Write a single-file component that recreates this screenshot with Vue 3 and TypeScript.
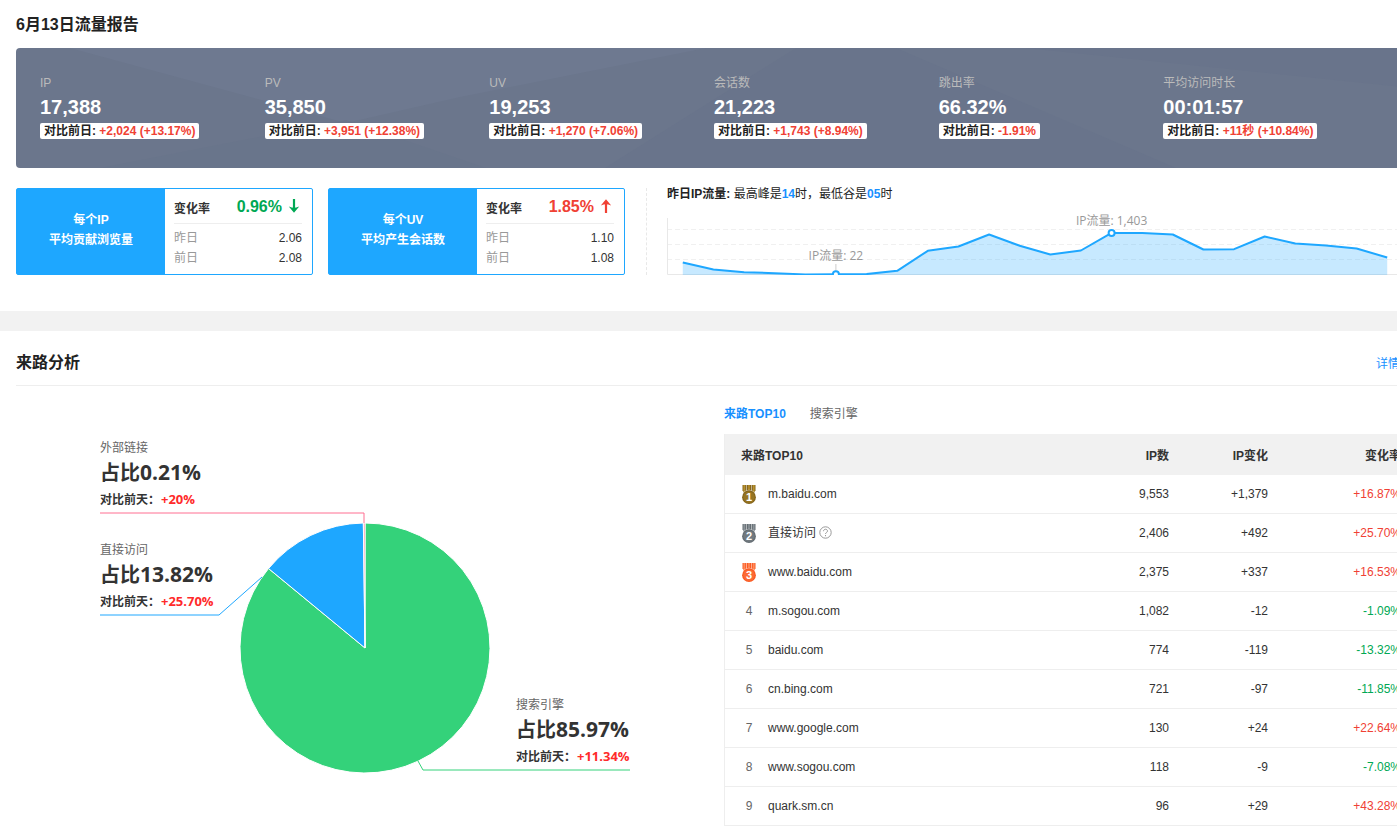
<script setup lang="ts">
interface Metric { label: string; value: string; diff: string }
interface Ratio { top: string; bottom: string; rate: string; up: boolean; yesterday: string; before: string }
interface Source { name: string; ip: string; change: string; rate: string; help?: boolean }
interface Callout { name: string; share: string; diff: string; x: number; y: number }

const metrics: Metric[] = [
  { label: 'IP', value: '17,388', diff: '+2,024 (+13.17%)' },
  { label: 'PV', value: '35,850', diff: '+3,951 (+12.38%)' },
  { label: 'UV', value: '19,253', diff: '+1,270 (+7.06%)' },
  { label: '会话数', value: '21,223', diff: '+1,743 (+8.94%)' },
  { label: '跳出率', value: '66.32%', diff: '-1.91%' },
  { label: '平均访问时长', value: '00:01:57', diff: '+11秒 (+10.84%)' },
]

const ratios: Ratio[] = [
  { top: '每个IP', bottom: '平均贡献浏览量', rate: '0.96%', up: false, yesterday: '2.06', before: '2.08' },
  { top: '每个UV', bottom: '平均产生会话数', rate: '1.85%', up: true, yesterday: '1.10', before: '1.08' },
]

const sources: Source[] = [
  { name: 'm.baidu.com', ip: '9,553', change: '+1,379', rate: '+16.87%' },
  { name: '直接访问', ip: '2,406', change: '+492', rate: '+25.70%', help: true },
  { name: 'www.baidu.com', ip: '2,375', change: '+337', rate: '+16.53%' },
  { name: 'm.sogou.com', ip: '1,082', change: '-12', rate: '-1.09%' },
  { name: 'baidu.com', ip: '774', change: '-119', rate: '-13.32%' },
  { name: 'cn.bing.com', ip: '721', change: '-97', rate: '-11.85%' },
  { name: 'www.google.com', ip: '130', change: '+24', rate: '+22.64%' },
  { name: 'www.sogou.com', ip: '118', change: '-9', rate: '-7.08%' },
  { name: 'quark.sm.cn', ip: '96', change: '+29', rate: '+43.28%' },
]

const medals = [
  { light: '#b8922e', dark: '#86661c' },
  { light: '#8b9398', dark: '#646d73' },
  { light: '#ff8a5a', dark: '#fa5a22' },
]

// Hourly IP counts; the vertical axis runs from 0 to 1500.
const hours = [417, 183, 93, 60, 20, 22, 30, 140, 807, 950, 1350, 973, 683, 817, 1403, 1397, 1350, 850, 860, 1283, 1050, 983, 883, 583]
const base = 75
const band = 735 / hours.length
const px = (i: number) => Math.round((band * (i + 0.5) + 0.5) * 10) / 10
const py = (v: number) => Math.round((base - v * 0.03) * 10) / 10
const line = hours.map((v, i) => `${px(i)},${py(v)}`).join(' ')
const area = `${px(0)},${base} ${line} ${px(hours.length - 1)},${base}`

// Pie slices, clockwise from twelve o'clock.
const cx = 349
const cy = 262
const radius = 125
const shares = [
  { share: 85.97, color: '#34d27a' },
  { share: 13.82, color: '#1ea7ff' },
  { share: 0.21, color: '#ff6f91' },
]
let turned = 0
const slices = shares.map(({ share, color }) => {
  const at = (p: number) => {
    const a = (p / 100) * Math.PI * 2
    return `${(cx + radius * Math.sin(a)).toFixed(2)} ${(cy - radius * Math.cos(a)).toFixed(2)}`
  }
  const from = at(turned)
  turned += share
  return { color, d: `M${cx} ${cy}L${from}A${radius} ${radius} 0 ${share > 50 ? 1 : 0} 1 ${at(turned)}Z` }
})

const callouts: Callout[] = [
  { name: '外部链接', share: '0.21%', diff: '+20%', x: 84, y: 66 },
  { name: '直接访问', share: '13.82%', diff: '+25.70%', x: 84, y: 168 },
  { name: '搜索引擎', share: '85.97%', diff: '+11.34%', x: 500, y: 323 },
]
</script>

<template>
  <div class="viewport">
    <main class="page">
      <section class="report">
        <h1>6月13日流量报告</h1>
        <div class="banner">
          <svg class="facets" viewBox="0 0 1396 120" preserveAspectRatio="none" aria-hidden="true">
            <polygon points="54,0 690,0 444,49 330,75" fill="#6e7990" />
            <polygon points="84,120 330,72 470,120" fill="#69758b" />
            <polygon points="589,120 780,0 880,0 1160,120" fill="#69748b" />
            <polygon points="1010,0 1396,0 1396,40" fill="#69748b" />
          </svg>
          <div v-for="m in metrics" :key="m.label" class="metric">
            <div class="metric-label">{{ m.label }}</div>
            <div class="metric-value">{{ m.value }}</div>
            <div class="metric-diff">对比前日: <span class="up">{{ m.diff }}</span></div>
          </div>
        </div>

        <div class="summary">
          <div v-for="r in ratios" :key="r.top" class="ratio">
            <div class="ratio-name"><span>{{ r.top }}</span><span>{{ r.bottom }}</span></div>
            <div class="ratio-body">
              <div class="ratio-head">
                <span>变化率</span>
                <strong :class="r.up ? 'up' : 'down'">
                  {{ r.rate }}
                  <svg width="12" height="16" viewBox="0 0 12 16" :class="{ flip: r.up }" aria-hidden="true">
                    <path d="M6 1V13" stroke="currentColor" stroke-width="2.2" />
                    <path d="M.8 8.6Q4 9.8 6 9.8T11.2 8.6L6 14.8Z" fill="currentColor" />
                  </svg>
                </strong>
              </div>
              <div class="ratio-row"><span>昨日</span><b>{{ r.yesterday }}</b></div>
              <div class="ratio-row"><span>前日</span><b>{{ r.before }}</b></div>
            </div>
          </div>

          <div class="hourly">
            <p><b>昨日IP流量:</b> 最高峰是<em>14</em>时，最低谷是<em>05</em>时</p>
            <svg class="trend" role="img" aria-label="昨日IP流量">
              <g stroke="#f0f0f0" stroke-dasharray="5 3">
                <path d="M0 29.5H745" /><path d="M0 44.5H745" /><path d="M0 59.5H745" />
              </g>
              <path d="M.5 18V74.5H745" fill="none" stroke="#e8e8e8" />
              <polygon :points="area" fill="#1ea7ff" fill-opacity=".25" />
              <polyline :points="line" fill="none" stroke="#1ea7ff" stroke-width="2" stroke-linejoin="round" />
              <path :d="`M${px(5)} 64V71`" stroke="#ccc" />
              <circle :cx="px(5)" :cy="py(22)" r="3" fill="#fff" stroke="#1ea7ff" stroke-width="2" />
              <circle :cx="px(14)" :cy="py(1403)" r="3" fill="#fff" stroke="#1ea7ff" stroke-width="2" />
              <text :x="px(5)" y="60">IP流量: 22</text>
              <text :x="px(14)" y="25">IP流量: 1,403</text>
            </svg>
          </div>
        </div>
      </section>

      <section class="sources">
        <header>
          <h2>来路分析</h2>
          <a href="#">详情</a>
        </header>
        <div class="columns">
          <svg class="pie" role="img" aria-label="来路分析">
            <path v-for="s in slices" :key="s.color" :d="s.d" :fill="s.color" stroke="#fff" />
            <g fill="none">
              <path d="M84 127H348V137" stroke="#ff6f91" />
              <path d="M84 229H203L246 191" stroke="#1ea7ff" />
              <path d="M614 384H407L402 375" stroke="#34d27a" />
            </g>
            <g v-for="c in callouts" :key="c.name">
              <text class="c-name" :x="c.x" :y="c.y">{{ c.name }}</text>
              <text class="c-share" :x="c.x" :y="c.y + 28">占比<tspan>{{ c.share }}</tspan></text>
              <text class="c-diff" :x="c.x" :y="c.y + 52">对比前天：</text>
              <text class="c-rate" :x="c.x + 61" :y="c.y + 52">{{ c.diff }}</text>
            </g>
          </svg>

          <div class="ranking">
            <nav>
              <button type="button" class="active">来路TOP10</button>
              <button type="button">搜索引擎</button>
            </nav>
            <table>
              <colgroup><col><col class="w-ip"><col class="w-change"><col class="w-rate"></colgroup>
              <thead>
                <tr><th>来路TOP10</th><th>IP数</th><th>IP变化</th><th>变化率</th></tr>
              </thead>
              <tbody>
                <tr v-for="(s, i) in sources" :key="s.name">
                  <td>
                    <div class="source">
                      <svg v-if="i < 3" class="medal" width="16" height="20" viewBox="0 0 16 20" role="img" :aria-label="String(i + 1)">
                        <path d="M1.5 0H14.5V5.5L12 8H4L1.5 5.5Z" :fill="medals[i].dark" />
                        <path d="M3.2 0V7M8 0V7M12.8 0V7" :stroke="medals[i].light" stroke-width="1.6" />
                        <path d="M5.4 0V6M10.6 0V6" stroke="#fff" stroke-opacity=".55" />
                        <circle cx="8" cy="12.2" r="7.4" fill="#fff" fill-opacity=".6" />
                        <circle cx="8" cy="12.2" r="6.9" :fill="medals[i].dark" />
                        <circle cx="8" cy="12.2" r="5.6" :fill="medals[i].light" fill-opacity=".35" />
                        <text x="8" y="16">{{ i + 1 }}</text>
                      </svg>
                      <span v-else class="rank">{{ i + 1 }}</span>
                      <span>{{ s.name }}</span>
                      <svg v-if="s.help" class="help" width="13" height="13" viewBox="0 0 13 13" fill="none" stroke="#999" aria-hidden="true">
                        <circle cx="6.5" cy="6.5" r="5.7" />
                        <path d="M4.5 5.2C4.5 2.6 8.5 2.6 8.5 5.1C8.5 6.4 6.5 6.5 6.5 8M6.5 9V10.2" />
                      </svg>
                    </div>
                  </td>
                  <td>{{ s.ip }}</td>
                  <td>{{ s.change }}</td>
                  <td :class="s.rate.startsWith('+') ? 'up' : 'down'">{{ s.rate }}</td>
                </tr>
              </tbody>
            </table>
          </div>
        </div>
      </section>
    </main>
  </div>
</template>

<style>
body {
  margin: 0;
  background: #fff;
}
</style>

<style scoped>
.viewport {
  overflow: hidden;
  font: 12px/20px "Liberation Sans", "Noto Sans CJK SC", sans-serif;
  color: #333;
}
.page {
  min-width: 1428px;
}
h1, h2, p {
  margin: 0;
}
h1, h2 {
  font-size: 16px;
  color: #222;
}
h1 {
  padding-top: 2px;
  line-height: 46px;
}
.up {
  color: #f04134;
}
.down {
  color: #00a854;
}
.report {
  padding: 0 16px 36px;
  border-bottom: 20px solid #f2f2f2;
}
.banner {
  position: relative;
  display: grid;
  grid-template-columns: repeat(6, 1fr);
  box-sizing: border-box;
  height: 120px;
  padding: 24px;
  border-radius: 4px;
  overflow: hidden;
  background: #6b768c;
}
.facets {
  position: absolute;
  inset: 0;
  width: 100%;
  height: 100%;
}
.metric {
  position: relative;
}
.metric-label {
  line-height: 22px;
  color: #bbb;
}
.metric-value {
  font-size: 20px;
  font-weight: bold;
  line-height: 26px;
  color: #fff;
}
.metric-diff {
  width: max-content;
  margin-top: 3px;
  padding: 0 4px;
  border-radius: 2px;
  background: #fff;
  color: #222;
  font-weight: bold;
  line-height: 16px;
}
.summary {
  display: flex;
  padding-top: 20px;
}
.ratio {
  display: flex;
  box-sizing: border-box;
  width: 297px;
  height: 87px;
  margin-right: 15px;
  border: 1px solid #1ea7ff;
  border-radius: 2px;
}
.ratio-name {
  display: flex;
  flex: 1;
  flex-direction: column;
  align-items: center;
  justify-content: center;
  padding-bottom: 4px;
  background: #1ea7ff;
  color: #fff;
  font-weight: bold;
}
.ratio-body {
  width: 128px;
  padding: 0 10px 0 9px;
}
.ratio-head {
  display: flex;
  justify-content: space-between;
  height: 34px;
  margin-bottom: 4px;
  border-bottom: 1px solid #eee;
  font-weight: bold;
  line-height: 40px;
}
.ratio-head strong {
  display: flex;
  gap: 6px;
  padding-right: 2px;
  font-size: 16px;
  line-height: 36px;
}
.ratio-head svg {
  margin-top: 9px;
}
.flip {
  transform: rotate(180deg);
}
.ratio-row {
  display: flex;
  justify-content: space-between;
  color: #999;
}
.ratio-row b {
  color: #333;
  font-weight: normal;
}
.hourly {
  flex: 1;
  min-width: 0;
  margin-left: 6px;
  padding-left: 20px;
  border-left: 1px dashed #e8e8e8;
}
.hourly p {
  line-height: 12px;
  color: #222;
}
.hourly em {
  color: #1890ff;
  font-style: normal;
  font-weight: bold;
}
.trend {
  display: block;
  width: 100%;
  height: 75px;
  overflow: hidden;
}
.trend text {
  fill: #999;
  font-family: "Open Sans", "Noto Sans CJK SC", sans-serif;
  text-anchor: middle;
}
.sources {
  padding: 10px 16px 0;
}
.sources header {
  display: flex;
  justify-content: space-between;
  height: 44px;
  border-bottom: 1px solid #eee;
  line-height: 44px;
}
.sources header a {
  width: 36px;
  color: #1890ff;
  text-decoration: none;
  line-height: 46px;
}
.columns {
  display: grid;
  grid-template-columns: 1fr 1fr;
  gap: 20px;
}
.pie {
  width: 100%;
  height: 420px;
  font-family: "Open Sans", "Noto Sans CJK SC", sans-serif;
}
.c-name {
  fill: #666;
}
.c-share {
  fill: #333;
  font-size: 20px;
  font-weight: bold;
}
.c-share tspan {
  font-size: 21px;
}
.c-diff {
  fill: #333;
  font-weight: bold;
}
.c-rate {
  fill: #ff2a2a;
  font-size: 13px;
  font-weight: bold;
}
.ranking {
  padding-top: 18px;
}
nav {
  display: flex;
  gap: 24px;
  padding-bottom: 10px;
}
button {
  padding: 0;
  border: 0;
  background: none;
  color: #666;
  font: inherit;
  cursor: pointer;
}
button.active {
  color: #1890ff;
  font-weight: bold;
}
table {
  width: 100%;
  table-layout: fixed;
  border-collapse: separate;
  border-spacing: 0;
  border-left: 1px solid #eee;
}
.w-ip {
  width: 120px;
}
.w-change {
  width: 99px;
}
.w-rate {
  width: 128px;
}
th, td {
  box-sizing: border-box;
  padding: 0 16px;
  text-align: right;
}
th {
  height: 41px;
  padding-top: 2px;
  background: #f1f1f1;
}
td {
  height: 39px;
  border-bottom: 1px solid #eee;
}
th:first-child, td:first-child {
  text-align: left;
}
th:last-child, td:last-child {
  padding-right: 11px;
}
.source {
  display: flex;
  align-items: center;
}
.medal {
  margin-top: 1px;
}
.rank {
  width: 16px;
  text-align: center;
  color: #666;
}
.source span:nth-child(2) {
  margin-left: 11px;
}
.source text {
  fill: #fff;
  font-size: 11px;
  font-weight: bold;
  text-anchor: middle;
}
.help {
  margin: 0 0 1px 3px;
}
</style>
